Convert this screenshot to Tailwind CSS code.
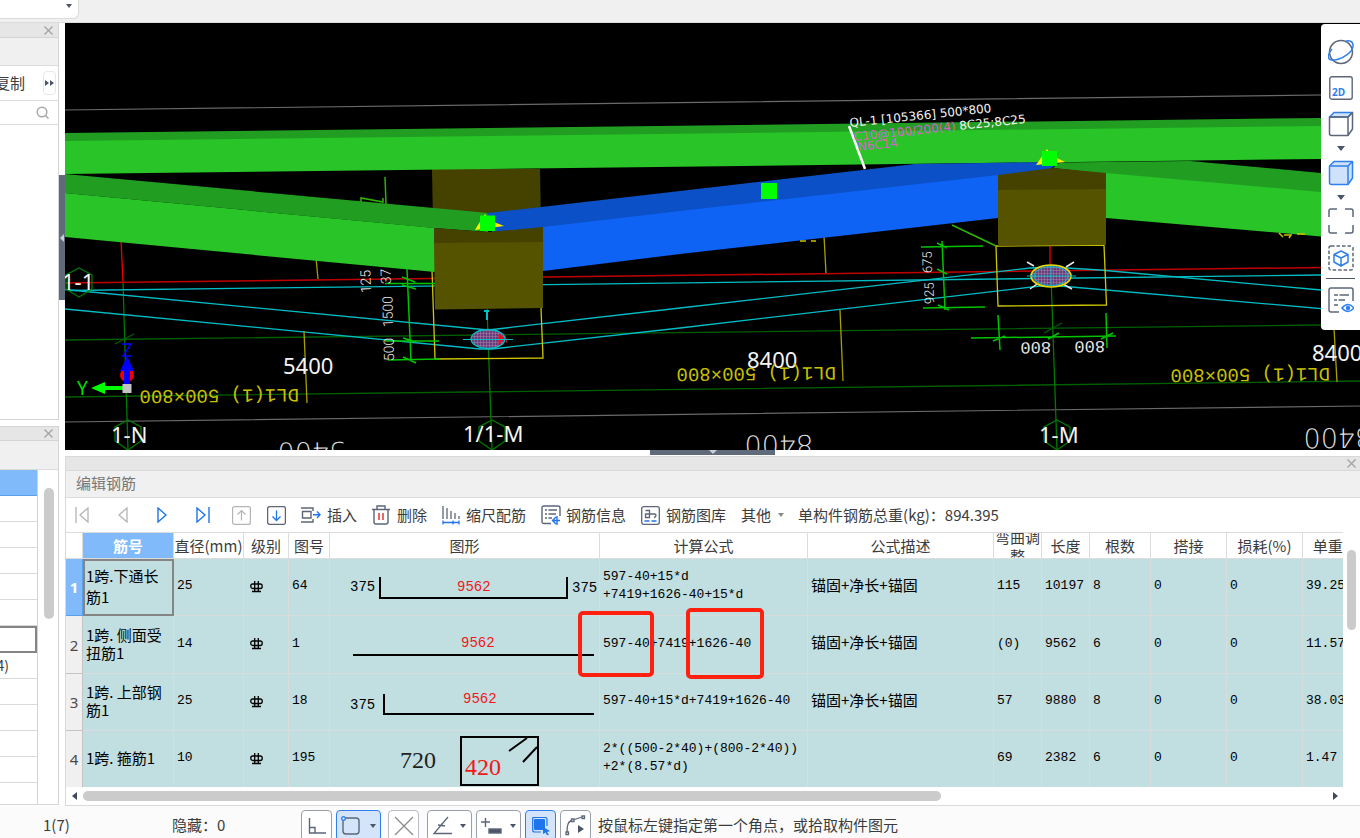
<!DOCTYPE html>
<html lang="zh-CN">
<head>
<meta charset="utf-8">
<title>编辑钢筋</title>
<script src="https://cdn.jsdelivr.net/npm/@tailwindcss/browser@4"></script>
</head>
<body class="flex h-screen flex-col overflow-hidden bg-white font-['Noto_Sans_CJK_SC','Noto_Sans',sans-serif] text-[15px] text-[#3c3c3c]">

<header class="h-[23px] shrink-0 border-b border-[#dcdcdc] bg-[#f0f0f0]">
  <button aria-label="展开列表" class="flex h-[19px] w-[79px] justify-end rounded-br-md border-r border-b border-[#dcdcdc] bg-white pt-[4px] pr-[6px]">
    <svg class="h-[4px] w-[6px]" viewBox="0 0 6 4"><path d="M0 0h6L3 4z" fill="#4b5568"/></svg>
  </button>
</header>

<main class="flex min-h-0 flex-1">
  <aside class="flex w-[59px] shrink-0 flex-col">
    <section class="flex min-h-0 flex-1 flex-col border-r border-b border-[#d4d4d4]">
      <div class="flex h-[15px] items-center justify-end border-b border-[#d4d4d4] bg-[#e6e6e6] pr-[5px]">
        <button aria-label="关闭"><svg class="size-[9px]" viewBox="0 0 9 9"><path d="M.5.5l8 8M8.500.5l-8 8" stroke="#a3a3a3" stroke-width="1.300"/></svg></button>
      </div>
      <div class="h-[28px] border-b border-[#dcdcdc] bg-[#f0f0f0]"></div>
      <div class="flex h-[35px] items-center justify-end border-b border-[#dcdcdc] pr-[2px]">
        <button class="whitespace-nowrap pr-[18px]">复制</button>
        <button aria-label="更多" class="flex h-[24px] w-[13px] shrink-0 items-center justify-center rounded border border-[#e8e8e8]">
          <svg class="h-[6px] w-[9px]" viewBox="0 0 9 6"><path d="M0 0l4 3-4 3zM5 0l4 3-4 3z" fill="#4b5568"/></svg>
        </button>
      </div>
      <div class="flex h-[24px] items-center justify-end border-b border-[#dcdcdc] pr-[9px]">
        <button aria-label="搜索"><svg class="size-[13px]" viewBox="0 0 13 13" fill="none" stroke="#a8a8a8" stroke-width="1.500"><circle cx="6" cy="6" r="4.800"/><path d="M9.500 9.500l3 3"/></svg></button>
      </div>
    </section>
    <section class="mt-[6px] mb-px flex h-[379px] shrink-0 flex-col border-t border-r border-b border-[#d4d4d4]">
      <div class="flex h-[14px] shrink-0 items-center justify-end border-b border-[#d4d4d4] bg-[#e6e6e6] pr-[5px]">
        <button aria-label="关闭"><svg class="size-[9px]" viewBox="0 0 9 9"><path d="M.5.5l8 8M8.500.5l-8 8" stroke="#a3a3a3" stroke-width="1.300"/></svg></button>
      </div>
      <div class="h-[29px] shrink-0 border-b border-[#dcdcdc] bg-[#f0f0f0]"></div>
      <div class="flex min-h-0 flex-1">
        <div class="w-[38px] shrink-0 overflow-hidden border-r border-[#d4d4d4]">
          <div class="h-[26px] border-b border-[#5a9fe8] bg-[#80bafa]"></div>
          <div class="h-[26px] border-b border-[#d9d9d9]"></div>
          <div class="h-[26px] border-b border-[#d9d9d9]"></div>
          <div class="h-[26px] border-b border-[#d9d9d9]"></div>
          <div class="h-[26px] border-b border-[#d9d9d9]"></div>
          <div class="h-[26px] border-b border-[#d9d9d9]"></div>
          <div class="h-[27px] border-2 border-l-0 border-[#858585]"></div>
          <div class="flex h-[26px] items-center justify-end border-b border-[#d9d9d9] pr-[28px] text-[14px] whitespace-nowrap">(4)</div>
          <div class="h-[26px] border-b border-[#d9d9d9]"></div>
          <div class="h-[26px] border-b border-[#d9d9d9]"></div>
          <div class="h-[26px] border-b border-[#d9d9d9]"></div>
          <div class="h-[26px] border-b border-[#d9d9d9]"></div>
        </div>
        <div class="flex-1 pt-[18px] pl-[6px]"><div class="h-[131px] w-[10px] rounded-full bg-[#cbcbcb]"></div></div>
      </div>
    </section>
  </aside>

  <div class="w-[6px] shrink-0 pt-[152px]">
    <div class="flex h-[125px] items-center bg-[#5f6b7a]"><svg class="h-[8px] w-[6px]" viewBox="0 0 6 8"><path d="M5 0v8L1 4z" fill="#c9ced6"/></svg></div>
  </div>

  <div class="flex min-w-0 flex-1 flex-col">
    <section class="relative min-h-0 flex-1 overflow-hidden bg-black">
      <svg class="h-full w-full" viewBox="65 23 1295 427" preserveAspectRatio="xMinYMin slice" fill="none" role="img" aria-label="三维视图">
        <defs>
          <pattern id="mesh" width="3" height="3" patternUnits="userSpaceOnUse"><rect width="3" height="3" fill="#6b3a7c"/><path d="M0 0h3M0 0v3" stroke="#a58aa8" stroke-width="1"/></pattern>
        </defs>
        <g stroke="#6a6a6a" stroke-width="1.200"><path d="M65 110L1360 94.500M65 422L1360 406"/></g>
        <!-- axis grid -->
        <g stroke="#006000" stroke-width="1.300">
          <path d="M65 340L1360 324.500M65 397L1360 381"/>
          <path d="M123 282L128 450M487 308L492 450M1051 276L1057 450" stroke="#007a00"/>
          <path d="M115 344l19-10M1044 333l18-10"/>
        </g>
        <path d="M121 240L123 282M1050 245V276" stroke="#f00000" stroke-width="1.300"/>
        <path d="M65 283L1321 267.500" stroke="#c00000" stroke-width="1.500"/>
        <g stroke="#00bcc4" stroke-width="1.300">
          <path d="M68 290.500L1321 275"/>
          <path d="M65 289.500L488 330L680 308L1030 268L1050 267L1100 270L1321 290"/>
          <path d="M65 309L480 349H492L680 328L1040 286L1060 286L1360 312"/>
        </g>
        <g stroke="#a8a000" stroke-width="1.300">
          <path d="M316 258l2 21M304 331l3 72M824 236l2 37M840 310l3 71M1334 328l3 54"/>
          <path d="M432 270L435 359L543 358L541 308M996 246L998 306L1106.500 305L1104 245Z" stroke="#d0c800"/>
        </g>
        <!-- members -->
        <path d="M432 169H540L541 225H433z" fill="#454200"/>
        <path d="M65 133L1321 118V127L65 142z" fill="#219e21"/>
        <path d="M65 141L1321 126V159L65 174z" fill="#28c428"/>
        <path d="M65 174L434 208L488 213V232L434 228L65 193z" fill="#219e21"/>
        <path d="M65 193L435 228V272L65 237z" fill="#28c428"/>
        <path d="M487 213L541 207L680 191L915 164L1060 162L1050 169L998 176L680 212L543 228L492 232z" fill="#0b50c6"/>
        <path d="M543 227L680 211L998 175V218L680 254L543 271z" fill="#0e63f4"/>
        <path d="M1053 168L1060 162.500L1190 161L1321 173V193L1106 174z" fill="#219e21"/>
        <path d="M1106 173L1321 192V236.500L1106 218z" fill="#28c428"/>
        <path d="M434 228L488 232L543 227V243H434z" fill="#454200"/>
        <path d="M434 243L543 242V308L435 309.500z" fill="#555200"/>
        <path d="M998 175L1053 168L1106 173V190H998z" fill="#454200"/>
        <path d="M998 190L1106 189V245L998 246z" fill="#555200"/>
        <!-- dimension lines -->
        <g stroke="#00c400" stroke-width="1.500">
          <path d="M407 269L411 361M385 283.500H435M385 341H439M388 360L440 359M402 277l13 5M402 285l14 4M403 338l13 4M403 357l13 6"/>
          <path d="M385 177L386 204M361 202v-4l22 4v-4" stroke="#2fb400"/>
          <path d="M942 241L945 310M921 247L983 246M923 308L985 307M937 243l10 5M937 269l10 5M938 305l11 5"/>
          <path d="M971 338L1116 336M998 315L1000 350M1106 313L1107 348M993 341l12-5M1048 339l11-6M1101 339l12-6"/>
          <path d="M952 225L996 246" stroke="#2fb400"/>
        </g>
        <!-- nodes -->
        <path d="M487 310v10M484 311h5" stroke="#00c4cc" stroke-width="2"/>
        <ellipse cx="488" cy="339" rx="17" ry="9.500" fill="url(#mesh)" stroke="#00bcc4" stroke-width="1.300"/>
        <path d="M499 334l5 4-5 7zM505 335l2 8" fill="#e01020" stroke="#e01020"/>
        <path d="M463 339.500H513" stroke="#00bcc4"/>
        <path d="M1027 262l7 4M1074 262l-8 5M1030 289l7-5M1072 289l-9-5" stroke="#e8e8e8" stroke-width="1.500"/>
        <ellipse cx="1051" cy="276" rx="20" ry="11" fill="url(#mesh)" stroke="#e6de00" stroke-width="1.600"/>
        <ellipse cx="1051" cy="276" rx="17" ry="9.500" stroke="#00bcc4"/>
        <path d="M1027 276H1076M1051 266V286" stroke="#00bcc4"/>
        <path d="M475 230l6-10 4-6 4 6 15 6zM1036 165l7-10 4-6 4 6 14 7z" fill="#fff200"/>
        <path d="M480 215.500h15v15.500h-15zM761 183h16v16h-16zM1042 151h15v15h-15z" fill="#00ff00"/>
        <path d="M1279 233l4 4M1284 235h7l-2 3M1297 234h8M800 241h6M811 241h5" stroke="#c8c000" stroke-width="1.500"/>
        <path d="M849 126L865 169" stroke="#fff" stroke-width="2.500"/>
        <g stroke="#007a00" stroke-width="1.300">
          <path d="M128 420l13 7v14l-13 9-13-9v-14zM492 420l13 7v14l-13 9-13-9v-14zM1057 420l13 7v14l-13 9-13-9v-14zM79 268l13 7v14l-13 8-13-8v-14z"/>
        </g>
        <!-- labels -->
        <g fill="#f4f4f4" font-family="'Noto Sans',sans-serif" font-size="22">
          <text x="62" y="290">1-1</text>
          <text x="283" y="374">5400</text>
          <text x="747" y="368">8400</text>
          <text x="1312" y="361">8400</text>
          <text x="111" y="443">1-N</text>
          <text x="463" y="442">1/1-M</text>
          <text x="1039" y="443">1-M</text>
        </g>
        <g fill="#c8c000" font-family="'Liberation Mono',monospace" font-size="19">
          <text transform="translate(299 389) rotate(179.400)">DL1(1) 500×800</text>
          <text transform="translate(836 367) rotate(179.400)">DL1(1) 500×800</text>
          <text transform="translate(1330 368) rotate(179.400)">DL1(1) 500×800</text>
        </g>
        <g fill="#dedede" font-family="'DejaVu Sans Light','DejaVu Sans',sans-serif" font-weight="200" font-size="27">
          <text transform="translate(346 442) rotate(179.400)">5400</text>
          <text transform="translate(813 435) rotate(179.400)">8400</text>
          <text transform="translate(1372 428) rotate(179.400)">8400</text>
        </g>
        <g fill="#e6e6e6" font-family="'Liberation Mono',monospace" font-size="17">
          <text transform="translate(1051 342) rotate(179.400)">800</text>
          <text transform="translate(1105 341) rotate(179.400)">800</text>
        </g>
        <g fill="#f0f0f0" font-family="Roboto,sans-serif" font-weight="300" font-size="14">
          <text transform="translate(371 293) rotate(-92)">125</text>
          <text transform="translate(391 284) rotate(-92)">37</text>
          <text transform="translate(393 327) rotate(-91)">1500</text>
          <text transform="translate(394 361) rotate(-91)">500</text>
          <text transform="translate(932 273) rotate(-91)" font-size="13">675</text>
          <text transform="translate(934 304) rotate(-91)" font-size="13">925</text>
        </g>
        <g font-family="'DejaVu Sans',sans-serif" font-size="12" fill="#f4f4f4">
          <text transform="translate(850 127) rotate(-6)">QL-1 [105366] 500*800</text>
          <text transform="translate(854 141) rotate(-6)"><tspan fill="#d860c8">C10@100/200(4)</tspan> 8C25;8C25</text>
          <text transform="translate(858 151) rotate(-6)" fill="#d860c8">N6C14</text>
        </g>
        <!-- coordinate tripod -->
        <circle cx="127" cy="375" r="7" fill="#f00000"/>
        <path d="M127 356l7 15h-4v16h-6v-16h-4z" fill="#0000ff"/>
        <path d="M122 344h9l-8 12h8" stroke="#0000ff" stroke-width="1.500"/>
        <path d="M91 388l14-6v4h18v4h-18v4z" fill="#00ff00"/>
        <text x="77" y="395" font-family="'Noto Sans',sans-serif" font-size="19" fill="#00e000">Y</text>
        <path d="M122.500 384h9v9h-9z" fill="#c4c4c4"/>
      </svg>

      <nav class="absolute top-px right-0 flex h-[306px] w-[39px] flex-col items-center rounded-l-sm bg-white pt-[10px]" aria-label="视图工具">
        <button aria-label="动态观察" class="flex h-[36px] items-center"><svg class="size-[26px]" viewBox="0 0 26 26" fill="none" stroke-width="1.500"><circle cx="13" cy="13" r="11.500" stroke="#5c6678"/><path d="M4 10C-1 16-1 21 5 21c8 0 21-8 20-15 0-4-4-5-8-3.500" stroke="#2f80ed"/></svg></button>
        <button aria-label="二维" class="flex h-[36px] items-center"><svg class="size-[24px]" viewBox="0 0 24 24"><rect x=".8" y=".8" width="22.400" height="22.400" rx="2" fill="none" stroke="#5c6678" stroke-width="1.400"/><text x="3" y="20" font-family="'Open Sans','Noto Sans',sans-serif" font-weight="700" font-size="10" fill="#2f80ed">2D</text></svg></button>
        <button aria-label="俯视" class="flex h-[36px] items-center"><svg class="size-[26px]" viewBox="0 0 26 26" fill="none" stroke-width="1.500" stroke-linejoin="round"><path d="M1.500 6L6 1.500h18.500L20 6z" fill="#cfe2fb" stroke="#2f80ed"/><path d="M20 6l4.500-4.500V18L20 24.500M1.500 6H20v18.500H3.500q-2 0-2-2z" stroke="#5c6678"/></svg></button>
        <button aria-label="视角列表" class="flex h-[13px] items-center"><svg class="h-[5px] w-[8px]" viewBox="0 0 8 5"><path d="M0 0h8L4 5z" fill="#4b5568"/></svg></button>
        <button aria-label="实体" class="flex h-[36px] items-center"><svg class="size-[26px]" viewBox="0 0 26 26" fill="#cfe2fb" stroke="#2f80ed" stroke-width="1.500" stroke-linejoin="round"><path d="M1.500 6L6 1.500h18.500V18L20 24.500H3.500q-2 0-2-2z"/><path d="M1.500 6H20v18.500M20 6l4.500-4.500"/></svg></button>
        <button aria-label="显示列表" class="flex h-[12px] items-center"><svg class="h-[5px] w-[8px]" viewBox="0 0 8 5"><path d="M0 0h8L4 5z" fill="#4b5568"/></svg></button>
        <button aria-label="全屏" class="flex h-[36px] items-center"><svg class="size-[26px]" viewBox="0 0 26 26" fill="none" stroke="#5c6678" stroke-width="1.500"><path d="M1 9V3q0-2 2-2h6M17 1h6q2 0 2 2v6M25 17v6q0 2-2 2h-6M9 25H3q-2 0-2-2v-6"/></svg></button>
        <button aria-label="选中显示" class="flex h-[37px] items-center"><svg class="size-[26px]" viewBox="0 0 26 26" fill="none" stroke-linejoin="round"><rect x="1" y="1" width="24" height="24" rx="2" stroke="#5c6678" stroke-width="1.500" stroke-dasharray="3.500 2"/><path d="M13 6l7 3.500v7.500L13 21l-7-4V9.500zM6 9.500l7 3.500 7-3.500M13 13v8" stroke="#2f80ed" stroke-width="1.500"/></svg></button>
        <div class="my-[2px] h-px w-[29px] bg-[#4b5568]"></div>
        <button aria-label="显示设置" class="flex h-[38px] items-center"><svg class="size-[26px]" viewBox="0 0 26 26" fill="none" stroke="#5c6678" stroke-width="1.500"><path d="M11 25H3q-2 0-2-2V3q0-2 2-2h20q2 0 2 2v11"/><path d="M6 8h4M11.500 8H21M6 13h3M10.500 13H17M6 18h4"/><g stroke="#2f80ed"><path d="M14 21q6-7 12 0-6 7-12 0z" fill="#fff"/><circle cx="20" cy="21" r="1.500" fill="#2f80ed"/></g></svg></button>
      </nav>
    </section>

    <div class="flex h-[6px] shrink-0 justify-center pb-px">
      <div class="flex w-[125px] justify-center bg-[#5f6b7a]"><svg class="h-[4px] w-[8px]" viewBox="0 0 8 4"><path d="M0 0h8L4 4z" fill="#c9ced6"/></svg></div>
    </div>

    <section class="shrink-0 border border-r-0 border-[#d9d9d9]">
      <div class="flex h-[14px] items-center justify-end border-b border-[#d9d9d9] bg-[#e6e6e6] pr-[4px]">
        <button aria-label="关闭"><svg class="size-[9px]" viewBox="0 0 9 9"><path d="M.5.5l8 8M8.500.5l-8 8" stroke="#a3a3a3" stroke-width="1.300"/></svg></button>
      </div>
      <h2 class="h-[27px] border-b border-[#dcdcdc] bg-[#f0f0f0] pl-[10px] leading-[24px] text-[#777]">编辑钢筋</h2>

      <div class="flex h-[34px] items-center whitespace-nowrap pl-[9px]" role="toolbar">
        <button aria-label="首行"><svg class="mr-[28px] h-[16px] w-[15px]" viewBox="0 0 15 16" fill="none" stroke="#b4b4b4" stroke-width="1.300"><path d="M1 0v16M13 1v14L5 8z"/></svg></button>
        <button aria-label="上一行"><svg class="mr-[28px] h-[16px] w-[11px]" viewBox="0 0 11 16" fill="none" stroke="#b4b4b4" stroke-width="1.300"><path d="M9 1v14L1 8z"/></svg></button>
        <button aria-label="下一行"><svg class="mr-[28px] h-[16px] w-[11px]" viewBox="0 0 11 16" fill="none" stroke="#1f76ea" stroke-width="1.400"><path d="M1 1v14l8-7z"/></svg></button>
        <button aria-label="末行"><svg class="mr-[21px] h-[16px] w-[15px]" viewBox="0 0 15 16" fill="none" stroke="#1f76ea" stroke-width="1.400"><path d="M1 1v14l8-7zM13 0v16"/></svg></button>
        <button aria-label="上移"><svg class="mr-[16px] size-[19px]" viewBox="0 0 19 19" fill="none" stroke="#b4b4b4" stroke-width="1.200"><rect x=".6" y=".6" width="17.800" height="17.800" rx="2"/><path d="M9.500 14.500V5M5.500 8.500l4-4 4 4"/></svg></button>
        <button aria-label="下移"><svg class="mr-[15px] size-[19px]" viewBox="0 0 19 19" fill="none" stroke-width="1.300"><rect x=".6" y=".6" width="17.800" height="17.800" rx="2" stroke="#5c6678"/><path d="M9.500 4.500V14M5.500 10.500l4 4 4-4" stroke="#1f76ea"/></svg></button>
        <button class="mr-[15px] flex items-center gap-[6px]"><svg class="h-[16px] w-[20px]" viewBox="0 0 20 16" fill="none" stroke="#5c6678" stroke-width="1.400"><path d="M0 1h12v3M0 15h12v-3M1.500 4.500H10v6.500H1.500z"/><path d="M12 7.700h7M16 4.500l3 3.200-3 3.200" stroke="#1f76ea"/></svg>插入</button>
        <button class="mr-[15px] flex items-center gap-[7px]"><svg class="h-[20px] w-[18px]" viewBox="0 0 18 20" fill="none" stroke="#5c6678" stroke-width="1.400"><path d="M0 4.500h18M5 4.500V1h8v3.500M2 4.500V17q0 2 2 2h10q2 0 2-2V4.500"/><path d="M7 8v7M11 8v7" stroke="#e02828"/></svg>删除</button>
        <button class="mr-[15px] flex items-center gap-[6px]"><svg class="h-[19px] w-[18px]" viewBox="0 0 18 19" fill="none" stroke="#5c6678" stroke-width="1.300"><path d="M1 0v13M5 2v11M9 5v8M13 7v6M17 10v3"/><path d="M1 16.500h16M1 14.500v4M17 14.500v4M11 14.500v4" stroke="#1f76ea"/></svg>缩尺配筋</button>
        <button class="mr-[15px] flex items-center gap-[5px]"><svg class="size-[20px]" viewBox="0 0 20 20" fill="none" stroke="#5c6678" stroke-width="1.400"><path d="M10 18.500H3q-2 0-2-2V3q0-2 2-2h14q2 0 2 2v8M4 5h2M7.500 5H16M4 9h2M7.500 9H15M4 13h2M7.500 13H11"/><path d="M19 15.500h-7M15 12l-3.500 3.500L15 19M16 11v9" stroke="#1f76ea"/></svg>钢筋信息</button>
        <button class="mr-[15px] flex items-center gap-[6px]"><svg class="size-[19px]" viewBox="0 0 19 19" fill="none" stroke="#5c6678" stroke-width="1.300"><rect x=".7" y=".7" width="17.600" height="17.600" rx="2"/><path d="M4.500 4.500h4v7H4.500V8h9q1.500 0 1.500 1.500t-2 2"/><path d="M3.500 15h5M10.500 15H15.500" stroke="#1f76ea"/></svg>钢筋图库</button>
        <button class="mr-[14px] flex items-center gap-[7px]">其他<svg class="h-[4px] w-[6px]" viewBox="0 0 6 4"><path d="M0 0h6L3 4z" fill="#888"/></svg></button>
        <span>单构件钢筋总重(kg)：894.395</span>
      </div>

      <div class="flex h-[255px]">
        <div class="relative min-w-0 flex-1 overflow-hidden">
          <table class="w-[1314px] table-fixed border-separate border-spacing-0 text-black [&_td]:border-r [&_td]:border-b [&_td]:border-[#d8dcdc] [&_td]:bg-[#c1dee0] [&_td]:px-[3px] [&_td]:pt-0 [&_td]:pb-[2px] [&_th]:border-r [&_th]:border-b [&_th]:p-0 [&_thead_th]:border-t [&_thead_th]:border-[#dcdcdc]">
            <colgroup><col class="w-[17px]"><col class="w-[91px]"><col class="w-[70px]"><col class="w-[45px]"><col class="w-[41px]"><col class="w-[270px]"><col class="w-[208px]"><col class="w-[186px]"><col class="w-[48px]"><col class="w-[48px]"><col class="w-[61px]"><col class="w-[76px]"><col class="w-[76px]"><col class="w-[77px]"></colgroup>
            <thead>
              <tr class="h-[27px] leading-[20px] whitespace-nowrap text-[#3c3c3c] [&_th]:font-normal">
                <th></th>
                <th scope="col" class="bg-[#80bafa] text-white"><b>筋号</b></th>
                <th scope="col">直径(mm)</th>
                <th scope="col">级别</th>
                <th scope="col">图号</th>
                <th scope="col">图形</th>
                <th scope="col">计算公式</th>
                <th scope="col">公式描述</th>
                <th scope="col"><div class="flex h-[25px] items-center justify-center overflow-hidden text-center leading-[19px] whitespace-normal">弯曲调整</div></th>
                <th scope="col">长度</th>
                <th scope="col">根数</th>
                <th scope="col">搭接</th>
                <th scope="col">损耗(%)</th>
                <th scope="col">单重(kg)</th>
              </tr>
            </thead>
            <tbody class="font-['Liberation_Mono','Noto_Sans_CJK_SC',monospace] text-[13px] leading-[18px]">
              <tr class="h-[57px]">
                <th scope="row" class="border-[#5a9fe8] bg-[#80bafa] font-['Noto_Sans'] text-[15px] text-white">1</th>
                <td class="font-['Noto_Sans_CJK_SC'] text-[15px] leading-[21px] outline-2 -outline-offset-2 outline-[#858585]">1跨.下通长筋1</td>
                <td>25</td>
                <td><svg class="ml-[3px] h-[13px] w-[13px]" viewBox="0 0 13 13" fill="none" stroke="#000" stroke-width="1.300"><rect x=".8" y="4" width="11.400" height="4.500" rx="2"/><path d="M4.700 1V11.500M8.300 1V11.500M2 11.500H11"/></svg></td>
                <td>64</td>
                <td class="!p-0"><svg class="h-[56px] w-full" viewBox="0 0 269 56" font-size="14"><text x="20" y="32">375</text><path d="M50 18V39H237V18" fill="none" stroke="#000" stroke-width="2"/><text x="127" y="32" fill="#f01818">9562</text><text x="242" y="33">375</text></svg></td>
                <td>597-40+15*d<br>+7419+1626-40+15*d</td>
                <td class="text-[15px]"><span class="font-['Noto_Sans_CJK_SC']">锚固+净长+锚固</span></td>
                <td>115</td><td>10197</td><td>8</td><td>0</td><td>0</td><td>39.258</td>
              </tr>
              <tr class="h-[58px]">
                <th scope="row" class="border-[#c4c4c4] bg-[#f0f0f0] font-['Noto_Sans'] text-[15px] font-normal text-[#4a4a4a]">2</th>
                <td class="font-['Noto_Sans_CJK_SC'] text-[15px]">1跨. 侧面受<br>扭筋1</td>
                <td>14</td>
                <td><svg class="ml-[3px] h-[13px] w-[13px]" viewBox="0 0 13 13" fill="none" stroke="#000" stroke-width="1.300"><rect x=".8" y="4" width="11.400" height="4.500" rx="2"/><path d="M4.700 1V11.500M8.300 1V11.500M2 11.500H11"/></svg></td>
                <td>1</td>
                <td class="!p-0"><svg class="h-[57px] w-full" viewBox="0 0 269 57" font-size="14"><path d="M23 39H264" stroke="#000" stroke-width="2"/><text x="131" y="31" fill="#f01818">9562</text></svg></td>
                <td>597-40+7419+1626-40</td>
                <td class="text-[15px]"><span class="font-['Noto_Sans_CJK_SC']">锚固+净长+锚固</span></td>
                <td>(0)</td><td>9562</td><td>6</td><td>0</td><td>0</td><td>11.57</td>
              </tr>
              <tr class="h-[57px]">
                <th scope="row" class="border-[#c4c4c4] bg-[#f0f0f0] font-['Noto_Sans'] text-[15px] font-normal text-[#4a4a4a]">3</th>
                <td class="font-['Noto_Sans_CJK_SC'] text-[15px]">1跨. 上部钢<br>筋1</td>
                <td>25</td>
                <td><svg class="ml-[3px] h-[13px] w-[13px]" viewBox="0 0 13 13" fill="none" stroke="#000" stroke-width="1.300"><rect x=".8" y="4" width="11.400" height="4.500" rx="2"/><path d="M4.700 1V11.500M8.300 1V11.500M2 11.500H11"/></svg></td>
                <td>18</td>
                <td class="!p-0"><svg class="h-[56px] w-full" viewBox="0 0 269 56" font-size="14"><text x="20" y="35">375</text><path d="M54 20V40H264" fill="none" stroke="#000" stroke-width="2"/><text x="133" y="29" fill="#f01818">9562</text></svg></td>
                <td>597-40+15*d+7419+1626-40</td>
                <td class="text-[15px]"><span class="font-['Noto_Sans_CJK_SC']">锚固+净长+锚固</span></td>
                <td>57</td><td>9880</td><td>8</td><td>0</td><td>0</td><td>38.038</td>
              </tr>
              <tr class="h-[57px]">
                <th scope="row" class="border-[#c4c4c4] bg-[#f0f0f0] font-['Noto_Sans'] text-[15px] font-normal text-[#4a4a4a]">4</th>
                <td class="font-['Noto_Sans_CJK_SC'] text-[15px]">1跨. 箍筋1</td>
                <td>10</td>
                <td><svg class="ml-[3px] h-[13px] w-[13px]" viewBox="0 0 13 13" fill="none" stroke="#000" stroke-width="1.300"><rect x=".8" y="4" width="11.400" height="4.500" rx="2"/><path d="M4.700 1V11.500M8.300 1V11.500M2 11.500H11"/></svg></td>
                <td>195</td>
                <td class="!p-0"><svg class="h-[56px] w-full" viewBox="0 0 269 56" font-family="'Liberation Serif',serif" font-size="24"><text x="70" y="37" fill="#222">720</text><path d="M131 6H208V54H131zM179 20L197 7M193 31L207 16" fill="none" stroke="#000" stroke-width="2"/><text x="135" y="44" fill="#f01818">420</text></svg></td>
                <td>2*((500-2*40)+(800-2*40))<br>+2*(8.57*d)</td>
                <td></td>
                <td>69</td><td>2382</td><td>6</td><td>0</td><td>0</td><td>1.47</td>
              </tr>
            </tbody>
          </table>
          <div class="absolute top-[79px] left-[512px] h-[66px] w-[76px] rounded-[5px] border-4 border-[#ff2010]"></div>
          <div class="absolute top-[76px] left-[620px] h-[71px] w-[78px] rounded-[5px] border-4 border-[#ff2010]"></div>
        </div>
        <div class="w-[17px] shrink-0 px-[4px] pt-[18px]"><div class="h-[80px] w-[9px] rounded-full bg-[#cbcbcb]"></div></div>
      </div>

      <div class="flex h-[18px] items-center pr-[22px] pl-[6px]">
        <svg class="mr-[6px] h-[8px] w-[5px]" viewBox="0 0 5 8"><path d="M5 0v8L0 4z" fill="#3f4a5c"/></svg>
        <div class="min-w-0 flex-1"><div class="h-[10px] w-[69%] rounded-full bg-[#cbcbcb]"></div></div>
        <svg class="ml-[6px] h-[8px] w-[5px]" viewBox="0 0 5 8"><path d="M0 0v8l5-4z" fill="#3f4a5c"/></svg>
      </div>
    </section>
  </div>
</main>

<footer class="flex h-[32px] shrink-0 items-start overflow-hidden bg-[#fbfbfb] pt-[4px] leading-[30px] whitespace-nowrap">
  <span class="w-[172px] pl-[43px]">1(7)</span>
  <span class="w-[129px]">隐藏：0</span>
  <button aria-label="正交" class="mr-[4px] flex h-[31px] w-[31px] items-center justify-center rounded border border-[#9aa0aa] bg-white"><svg class="size-[18px]" viewBox="0 0 18 18" fill="none" stroke="#5c6678" stroke-width="1.400"><path d="M1.500 1v15H18M1.500 10.500H7V16"/></svg></button>
  <button aria-label="矩形" class="mr-[7px] flex h-[31px] w-[45px] items-center gap-[9px] rounded border border-[#2f80ed] bg-[#d4e4fa] pl-[4px]"><svg class="size-[20px]" viewBox="0 0 20 20" fill="none" stroke-width="1.400"><rect x="2" y="2" width="16" height="16" rx="3" stroke="#5c6678"/><circle cx="2.500" cy="2.500" r="1.800" fill="#fff" stroke="#2f80ed"/></svg><svg class="h-[4px] w-[6px]" viewBox="0 0 6 4"><path d="M0 0h6L3 4z" fill="#4b5568"/></svg></button>
  <button aria-label="交点" class="mr-[8px] flex h-[31px] w-[31px] items-center justify-center rounded border border-[#b8bcc4] bg-white"><svg class="size-[20px]" viewBox="0 0 20 20" fill="none" stroke="#8c8c8c" stroke-width="1.300"><path d="M1 1l18 18M19 1L1 19"/></svg></button>
  <button aria-label="角度" class="mr-[4px] flex h-[31px] w-[45px] items-center gap-[8px] rounded border border-[#9aa0aa] bg-white pl-[5px]"><svg class="size-[19px]" viewBox="0 0 19 19" fill="none" stroke="#5c6678" stroke-width="1.300"><path d="M15 1L1 17.500H19M5 9l7 1M9 7v3"/></svg><svg class="h-[4px] w-[6px]" viewBox="0 0 6 4"><path d="M0 0h6L3 4z" fill="#4b5568"/></svg></button>
  <button aria-label="偏移" class="mr-[4px] flex h-[31px] w-[45px] items-center gap-[8px] rounded border border-[#9aa0aa] bg-white pl-[4px]"><svg class="h-[18px] w-[21px]" viewBox="0 0 21 18" fill="none" stroke="#5c6678" stroke-width="1.400"><path d="M0 5h9M4.500 1v9"/><rect x="8" y="12" width="12" height="4" fill="#4b5568"/></svg><svg class="h-[4px] w-[6px]" viewBox="0 0 6 4"><path d="M0 0h6L3 4z" fill="#4b5568"/></svg></button>
  <button aria-label="选择" class="mr-[4px] flex h-[31px] w-[31px] items-center justify-center rounded border border-[#2f80ed] bg-[#d4e4fa]"><svg class="size-[18px]" viewBox="0 0 18 18"><rect x="2" y="2" width="11" height="11" rx="1" fill="#1f76ea"/><path d="M.7 3V1.500q0-1 1-1H13q2 0 2 2V9M.7 3v10q0 2 2 2H9" fill="none" stroke="#1f76ea" stroke-width="1.200"/><path d="M11 10l7 4-3 1 2 3-2 0-1.500-2.500L11 17z" fill="#1f76ea"/></svg></button>
  <button aria-label="曲线" class="mr-[7px] flex h-[31px] w-[31px] items-center justify-center rounded border border-[#9aa0aa] bg-white"><svg class="size-[21px]" viewBox="0 0 21 21" fill="none" stroke="#5c6678" stroke-width="1.300"><path d="M2 17C2 10 3 6 8 5M8 5l9-3"/><path d="M1 17h2.500v2.500H1zM6.500 4H9v2.500H6.500zM17 1h2.500v2.500H17z" fill="#fff"/><path d="M13 10l6 4-6 4z" fill="#4b5568" stroke="none"/></svg></button>
  <span>按鼠标左键指定第一个角点，或拾取构件图元</span>
</footer>
</body>
</html>
